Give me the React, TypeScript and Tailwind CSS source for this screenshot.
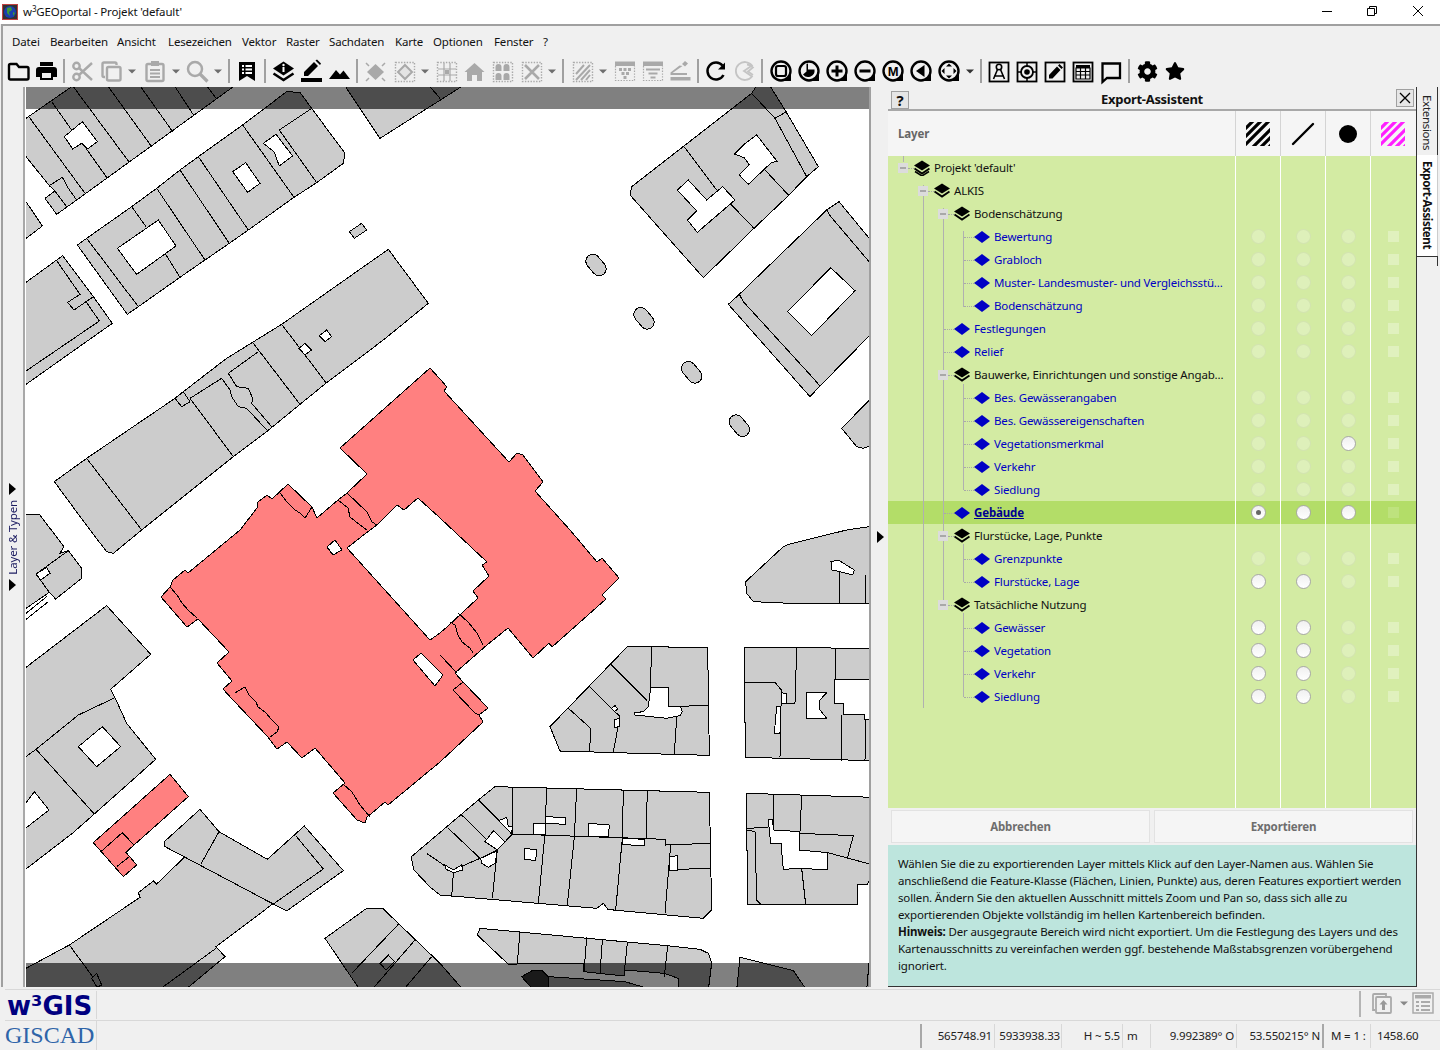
import React from "react";
import { FaCog, FaStar } from "react-icons/fa";

const G = "#a9a9a9";
const BG = "#f0f0f0";

function I({ children, w = "w-7", cls = "" }: { children?: React.ReactNode; w?: string; cls?: string }) {
  return (
    <svg viewBox={w === "w-7" ? "0 0 28 28" : "0 0 14 28"} className={`${w} h-7 shrink-0 ${cls}`}>
      {children}
    </svg>
  );
}
const Drop = ({ c = "#6e6e6e", cls = "" }: { c?: string; cls?: string }) => (
  <svg viewBox="0 0 14 28" className={`w-3.5 h-7 shrink-0 ${cls}`}>
    <polygon points="3,12.5 11,12.5 7,16.5" fill={c} />
  </svg>
);
const Sep = () => (
  <div className="w-2 h-7 shrink-0 flex">
    <div className="ml-[3px] mt-0.5 h-6 w-0.5 bg-[#a0a0a0]" />
  </div>
);
const Round = ({ children }: { children?: React.ReactNode }) => (
  <I>
    <path d="M14 14h10v10H14z" fill="#000" />
    <circle cx="14" cy="14" r="9.5" fill={BG} stroke="#000" strokeWidth="2.4" />
    {children}
  </I>
);
const Dotted = () => <rect x="5.5" y="5.5" width="19" height="19" fill="none" stroke={G} strokeWidth="1.4" strokeDasharray="1.4 1.4" />;

function Toolbar() {
  return (
    <div className="flex h-7 pl-px items-center">
      <I><path d="M5 8.5A1.5 1.5 0 0 1 6.5 7h6l2.5 3h8A1.5 1.5 0 0 1 24.5 11.5V21A1.5 1.5 0 0 1 23 22.5H6.5A1.5 1.5 0 0 1 5 21z" fill="none" stroke="#000" strokeWidth="2.4" /></I>
      <I><path d="M8 5h13v4H8zM4 13a3 3 0 0 1 3-3h15a3 3 0 0 1 3 3v7h-4v3H8v-3H4z" fill="#000" /><path d="M10 16h9v5h-9z" fill={BG} /></I>
      <Sep />
      <I><g fill="none" stroke={G} strokeWidth="2.4"><circle cx="8.5" cy="9" r="3.2" /><circle cx="8.5" cy="20" r="3.2" /><path d="M11 11l13 12M11 18L24 6" /></g></I>
      <I cls="ml-px"><g fill="none" stroke={G} strokeWidth="2.4"><path d="M8 20H7a1.5 1.5 0 0 1-1.5-1.5V7A1.5 1.5 0 0 1 7 5.5h11A1.5 1.5 0 0 1 19.500 7v1" /><rect x="10" y="10" width="13.500" height="13.500" rx="1.500" /></g></I>
      <Drop />
      <I cls="ml-0.5"><g fill="none" stroke={G} strokeWidth="2.4"><rect x="5.500" y="7" width="17" height="17" rx="1.500" /><path d="M9 13h10M9 16.500h10M9 20h10" strokeWidth="1.800" /></g><rect x="10" y="4" width="8" height="5" fill={G} /></I>
      <Drop />
      <I><g fill="none" stroke={G}><circle cx="12" cy="12" r="7" strokeWidth="2.500" /><path d="M17 17l7.500 7.500" strokeWidth="3.200" /></g></I>
      <Drop />
      <Sep />
      <I><path d="M6 5h16v19l-8-5-8 5z" fill="#000" /><path d="M9 8h2v2H9zM12.500 8h6.500v2h-6.500zM9 11.500h2v2H9zM12.500 11.500h6.500v2h-6.500zM9 15h2v2H9zM12.500 15h6.500v2h-6.500z" fill="#fff" /></I>
      <Sep />
      <I><polygon points="14.500,4.500 25,11.500 14.500,18.500 4,11.500" fill="#000" /><circle cx="14.500" cy="8" r="1.200" fill="#fff" /><rect x="13.500" y="10" width="2" height="5" fill="#fff" /><path d="M4.500 16.500l10 6.500 10-6.500" fill="none" stroke="#000" strokeWidth="2.600" /></I>
      <I><rect x="4" y="21" width="21" height="4" fill="#000" /><path d="M7 19v-4L17 5l4 4-10 10zM18.500 3.500l1.500-1 4 4-1 1.500z" fill="#000" /></I>
      <I><polygon points="4,22 11,13 15,17.500 18.500,13.500 25,22" fill="#000" /></I>
      <Sep />
      <I><polygon points="14.500,7 23,15 14.500,23 6,15" fill={G} /><path d="M5 6l3 3M24 6l-3 3M5 24l3-3M24 24l-3-3" stroke={G} strokeWidth="1.500" /></I>
      <I cls="ml-px"><Dotted /><polygon points="15,8 22,15 15,22 8,15" fill="#e4e4e4" stroke={G} strokeWidth="2" /></I>
      <Drop />
      <I><Dotted /><path d="M6 12h18M6 18h18M12 6v18M18 6v18" stroke={G} strokeWidth="1.200" /><rect x="13" y="13" width="4" height="4" fill={G} /></I>
      <I><path d="M14.500 6l10 9h-2.500v9h-5v-6h-5v6H7v-9H4.500z" fill={G} /></I>
      <I><Dotted /><path d="M7.500 14v-4a3 3 0 0 1 6 0v4zM15.500 14v-4a3 3 0 0 1 6 0v4zM7.500 23v-4a3 3 0 0 1 6 0v4zM15.500 23v-4a3 3 0 0 1 6 0v4z" fill={G} /></I>
      <I cls="ml-px"><Dotted /><path d="M8 8l14 14M22 8L8 22" stroke={G} strokeWidth="2.600" /></I>
      <Drop />
      <Sep />
      <I cls="ml-px"><Dotted /><path d="M8 17l8-9M8 23l14-15M13 23l9-10M18 23l4-5" stroke={G} strokeWidth="2" /></I>
      <Drop />
      <I><rect x="5" y="4.500" width="20" height="4.500" fill={G} /><path d="M5.500 9v14.500h19V9" fill="none" stroke={G} strokeWidth="1.200" strokeDasharray="1.400 1.400" /><path d="M9 11h3v3H9zM13.500 11h3v3h-3zM18 11h3v3h-3zM11.500 15h3v3h-3zM16 15h3v3h-3zM13.500 19h3v3h-3z" fill={G} /></I>
      <I><rect x="5" y="4.500" width="20" height="4.500" fill={G} /><path d="M5.500 9v14.500h19V9" fill="none" stroke={G} strokeWidth="1.200" strokeDasharray="1.400 1.400" /><path d="M8 11.500h14v2H8zM10.500 15.500h9v2h-9zM12.500 19.500h5v2h-5z" fill={G} /></I>
      <I><path d="M4.500 20h20v3.500h-20zM4.500 15.500l9-7 3 .5 -10 7h14.500v2H4.500zM16 7l3-3 3 2.500-3 3z" fill={G} /></I>
      <Sep />
      <I><path d="M21.500 18a8.500 8.500 0 1 1-1-9.500" fill="none" stroke="#000" strokeWidth="2.500" /><polygon points="23,5.500 23,12.500 16,12.500" fill="#000" /></I>
      <I><g fill="none" stroke="#c4c4c4" strokeWidth="1.800"><path d="M22 8.500A9 9 0 1 0 22 19.500L14 14z" /><path d="M17 7.500a9 9 0 0 1 6 3L18 14.500l5 3.500" /></g></I>
      <Sep />
      <div className="ml-px"><Round><rect x="9" y="9" width="10" height="10" rx="2" fill="none" stroke="#000" strokeWidth="2.200" /></Round></div>
      <Round><path d="M13 6.500v6h6.500A6.500 6.500 0 0 1 8 17.500l3.500-3V7z" fill="#000" /></Round>
      <Round><path d="M14 8.500v11M8.500 14h11" stroke="#000" strokeWidth="3" /></Round>
      <Round><path d="M8.500 14h11" stroke="#000" strokeWidth="3" /></Round>
      <Round><text x="14" y="18.500" textAnchor="middle" fontSize="13" fontWeight="700" fontFamily="Liberation Sans, sans-serif" fill="#000">M</text></Round>
      <Round><polygon points="17.500,8 17.500,20 9,14" fill="#000" /></Round>
      <Round><path d="M14 6.500l3 3h-6zM14 21.500l-3-3h6zM6.500 14l3-3v6zM21.500 14l-3 3v-6z" fill="#000" /></Round>
      <Drop c="#333" />
      <Sep />
      <I><rect x="4.500" y="5.500" width="19" height="19" fill="none" stroke="#000" strokeWidth="1.800" /><circle cx="14" cy="10" r="2.700" fill="none" stroke="#000" strokeWidth="1.600" /><path d="M12.500 12.500L8.500 22M15.500 12.500l4 9.500M9 19h10" fill="none" stroke="#000" strokeWidth="1.600" /></I>
      <I><rect x="4.500" y="5.500" width="19" height="19" fill="none" stroke="#000" strokeWidth="1.800" /><circle cx="14" cy="15" r="6" fill="none" stroke="#000" strokeWidth="1.800" /><circle cx="14" cy="15" r="2.800" fill="#000" /><path d="M14 6v3M14 21v3M5 15h3M20 15h3" stroke="#000" strokeWidth="1.500" /></I>
      <I><rect x="4.500" y="5.500" width="19" height="19" fill="none" stroke="#000" strokeWidth="1.800" /><path d="M8 21.500v-3.500l8-8.500 3.500 3.500-8 8.500zM17 8.500l1.500-1.500 3.500 3.500-1.500 1.500z" fill="#000" /></I>
      <I><rect x="4.500" y="5.500" width="19" height="19" fill="none" stroke="#000" strokeWidth="1.800" /><rect x="7" y="8" width="14" height="3" fill="#000" /><path d="M7 11h14v11H7zM7 14.500h14M7 18h14M11.500 11v11M16.500 11v11" fill="none" stroke="#000" strokeWidth="1.200" /></I>
      <I><path d="M5.500 6.500h17.500v14.500H10l-4.500 4z" fill="none" stroke="#000" strokeWidth="2.300" /></I>
      <Sep />
      <div className="w-7 h-7 shrink-0 flex items-center justify-center"><FaCog className="w-[21px] h-[21px] text-black" /></div>
      <div className="w-7 h-7 shrink-0 flex items-center justify-center"><FaStar className="w-[20px] h-[20px] text-black" /></div>
    </div>
  );
}

const M = { vectorEffect: "non-scaling-stroke" as const, stroke: "#000", strokeWidth: 1 };
const P = ({ p, f = "#cccccc" }: { p: string; f?: string }) => <polygon points={p} fill={f} {...M} />;
const H = ({ p }: { p: string }) => <polygon points={p} fill="#fff" {...M} />;
const L = ({ p }: { p: string }) => <polyline points={p} fill="none" {...M} />;
const Z = ({ x, y, children }: { x: number; y: number; children?: React.ReactNode }) => (
  <g transform={`translate(${x} ${y}) scale(0.33333)`}>{children}</g>
);
const Oval = ({ x, y }: { x: number; y: number }) => (
  <rect x={x - 36} y={y - 21} width="72" height="42" rx="21" fill="#cccccc" transform={`rotate(50 ${x} ${y})`} {...M} />
);

function MapView() {
  const RED = "#ff8080";
  return (
    <svg viewBox="26 87 843 900" className="w-[843px] h-[900px] shrink-0 block" shapeRendering="crispEdges">
      <defs>
        <filter id="dim" filterUnits="userSpaceOnUse" x="26" y="87" width="843" height="900" colorInterpolationFilters="sRGB">
          <feComponentTransfer>
            <feFuncR type="linear" slope="1" intercept="-0.498" />
            <feFuncG type="linear" slope="1" intercept="-0.498" />
            <feFuncB type="linear" slope="1" intercept="-0.498" />
          </feComponentTransfer>
        </filter>
        <clipPath id="band" clipPathUnits="userSpaceOnUse">
          <rect x="26" y="87" width="843" height="22" />
          <rect x="26" y="963" width="843" height="24" />
        </clipPath>
      </defs>
      <g id="mapart">
        <rect x="26" y="87" width="843" height="900" fill="#fff" />
        <Z x={0} y={85}>
          <P p="78,100 215,5 700,5 230,345 170,388 135,340 165,318 148,302 78,215" />
          <H p="193,155 247,110 292,170 262,192 245,175 218,192" />
          <L p="155,50 215,135" /><L p="220,5 388,232" /><L p="325,5 455,185" /><L p="422,5 518,140" /><L p="525,5 582,92" /><L p="622,5 650,42" />
          <L p="88,97 255,325" /><L p="258,190 322,280" /><L p="165,318 200,365" /><L p="148,302 187,277 200,300 205,310 230,345" />
          <P p="78,350 127,423 78,460" />
          <P p="1030,-5 1400,-5 1140,160" />
          <L p="1290,5 1320,40" />
          <P p="232,480 260,460 395,365 470,310 540,255 595,215 728,120 860,20 900,22 935,70 1035,205 1030,235 950,293 882,337 745,435 688,475 615,525 540,577 415,665 382,688" />
          <L p="260,460 415,665" /><L p="395,365 438,425" /><L p="470,310 615,525" /><L p="540,255 688,475" /><L p="595,215 745,435" /><L p="728,120 882,337" /><L p="935,70 838,135 950,293" /><L p="497,508 540,577" />
          <H p="352,490 475,405 528,483 410,568" /><H p="698,260 737,233 780,295 743,322" /><H p="790,175 828,148 878,213 838,243 822,200" />
          <P p="1048,440 1085,415 1100,435 1063,460" />
          <P p="78,592 188,512 280,635 337,715 78,898" />
          <L p="170,527 240,628 203,652 222,675 280,635" /><L p="258,650 298,708 78,858" />
          <P p="163,1190 260,1120 525,940 550,920 680,820 845,718 1165,493 1285,655 1150,765 980,893 900,958 800,1040 700,1115 425,1335 340,1405 320,1400 270,1335" />
          <L p="260,1120 425,1335" /><L p="570,940 700,1115" /><L p="760,775 900,958" /><L p="845,718 978,893" />
          <L p="570,940 665,880 690,915 695,935 715,965 740,970 800,1035" />
          <L p="775,800 685,865 710,905 745,910 758,940 755,955 815,1025" />
          <L p="525,940 545,965 570,950 550,920" />
          <H p="958,752 980,735 995,755 975,770" /><H p="897,790 915,775 935,795 915,810" />
        </Z>
        <Z x={440} y={85}>
          <P p="570,330 575,305 935,25 955,-5 985,-5 1035,75 1135,245 1100,275 1045,332 942,430 790,578" />
          <L p="732,185 830,315" /><L p="935,25 1005,100 1100,275" /><L p="1005,100 1040,80" /><L p="870,355 942,430" /><L p="975,255 1047,332" />
          <H p="712,315 745,285 800,345 848,305 885,345 772,442 742,405 770,378" />
          <H p="883,207 910,180 950,150 1012,230 995,232 925,298 898,270 928,238 912,218" />
          <P p="865,658 898,628 1160,375 1197,350 1300,475 1300,740 1140,903 1110,935" />
          <L p="898,628 910,650 1120,880 1140,903" /><L p="1160,375 1170,392 1300,545" />
          <H p="1043,680 1172,548 1245,617 1115,752" />
          <Oval x={468} y={540} /><Oval x={612} y={700} /><Oval x={755} y={862} /><Oval x={898} y={1022} />
          <P p="1205,1030 1300,933 1300,1080 1270,1090 1250,1085" />
        </Z>
        <Z x={0} y={530}>
          <P p="78,-45 118,-47 192,50 180,70 205,62 245,115 245,145 167,207 148,187 78,235" />
          <L p="108,132 205,62" /><L p="108,132 148,187" /><H p="108,132 140,112 150,130 122,150" />
          <L p="78,250 140,200" /><L p="78,268 145,215" />
          <P p="320,227 452,373 332,478 345,503 380,580 467,688 283,852 217,910 78,1017 78,412" />
          <L p="78,680 108,658 235,555 345,503" /><L p="108,658 283,852" />
          <H p="235,650 307,590 362,650 290,710" /><H p="70,830 103,785 147,840 70,900" />
          <P f={RED} p="510,733 565,800 402,945 378,967 410,1005 370,1040 280,938" />
          <L p="305,963 367,908 402,945" /><L p="350,1010 388,980" />
          <P p="555,980 470,1062 460,1053 415,1088 420,1102 208,1245 78,1315 78,1380 555,1380 675,1280 648,1250 818,1122 602,1002" />
          <L p="208,1245 300,1370" /><L p="648,1255 490,1370" />
          <P p="275,1345 290,1330 305,1365 290,1370" />
          <P p="600,838 657,905 802,988 913,888 1030,1022 860,1143 820,1122 495,950 493,935" />
          <L p="657,905 603,1002" /><L p="888,918 970,1017 820,1122" />
          <P p="975,1225 1100,1135 1148,1135 1320,1300 1390,1380 1080,1380" />
          <L p="1195,1183 1055,1330" /><L p="1245,1230 1115,1380" /><L p="1295,1280 1210,1380" />
          <P p="1140,1300 1165,1275 1183,1295 1158,1320" />
        </Z>
        <Z x={440} y={530}>
          <P p="917,155 1030,50 1045,43 1220,0 1300,-12 1300,222 1095,222 940,215 920,190" />
          <L p="1198,125 1198,222" /><L p="1277,135 1277,222" />
          <H p="1173,95 1195,90 1243,120 1238,135 1200,125 1175,120" />
          <P p="330,590 562,350 803,352 808,676 660,672 360,663" />
          <L p="635,350 630,510" /><L p="512,402 622,512" /><L p="447,468 540,560" /><L p="383,533 452,595 449,663" /><L p="540,560 520,665" /><L p="710,562 703,672" /><L p="708,530 805,525" />
          <H p="632,472 685,472 685,530 722,530 727,545 720,557 680,565 585,555 585,548 610,545 625,530" />
          <H p="522,570 538,565 538,590 524,592" /><H p="515,535 525,527 533,537 523,545" />
          <P p="913,352 1300,355 1300,692 916,682" />
          <L p="915,457 1005,457 1024,480 1020,680" /><L p="1070,355 1065,520 1025,520" /><L p="1187,355 1185,450" /><L p="1205,555 1205,692" /><L p="1277,570 1275,692" />
          <H p="1185,450 1300,450 1300,570 1275,570 1275,555 1210,555 1210,520 1185,520" />
          <H p="1100,488 1160,488 1140,510 1140,540 1160,565 1100,565" />
          <H p="1010,530 1022,530 1020,610 1003,610" /><H p="1025,488 1040,492 1040,520 1025,520" />
          <P p="-87,981 115,810 165,770 808,787 815,1140 790,1165 520,1140 505,1140 490,1120 470,1135 0,1095 -30,1071 -78,1020" />
          <L p="217,770 217,912" /><L p="320,772 315,910" /><L p="410,775 403,920" /><L p="550,780 547,925" /><L p="622,782 618,925" />
          <L p="217,912 677,928 677,945 810,940" /><L p="692,945 675,1150" /><L p="403,920 382,1125" /><L p="315,910 295,1120" /><L p="547,925 527,1140" /><L p="172,960 157,1105" /><L p="40,1030 35,1100" /><L p="715,1018 810,1015" />
          <L p="115,810 217,912" /><L p="65,855 172,960" /><L p="25,895 120,985" /><L p="172,960 217,912" /><L p="172,960 120,985 40,1020" /><L p="-40,970 40,1025" />
          <H p="176,872 200,862 205,890 217,890 215,912" /><H p="280,880 318,880 318,915 280,915" /><H p="318,860 377,863 377,883 318,880" /><H p="445,880 508,885 505,920 445,918" /><H p="548,925 615,928 612,948 548,943" /><H p="255,955 290,960 287,992 253,987" /><H p="135,935 160,902 195,935 172,960" /><H p="122,985 172,962 165,1000 145,1012 125,1000" /><H p="15,1005 40,1020 65,1005 68,1020 40,1028 18,1018" /><H p="688,980 712,977 712,1022 688,1022" />
          <P p="920,790 1300,802 1300,1035 1280,1065 1253,1065 1253,1123 922,1123" />
          <L p="1000,795 1000,900" /><L p="1085,797 1080,905" /><L p="920,895 985,892" /><L p="920,900 945,905 950,1110 962,1123" /><L p="1085,1015 1097,1123" /><L p="1078,910 1240,917 1222,985" /><L p="1163,968 1300,1005" />
          <H p="985,870 998,870 1000,900 1080,905 1078,960 1163,968 1163,1020 1085,1015 1030,1018 1023,940 992,940" />
          <P p="112,1215 120,1195 680,1247 780,1258 805,1270 815,1300 805,1380 715,1380 715,1345 672,1330 555,1320 552,1338 430,1325 432,1300 232,1302 205,1303" />
          <L p="240,1205 232,1300" /><L p="440,1222 432,1325" /><L p="487,1230 480,1330" /><L p="562,1240 552,1335" /><L p="683,1248 673,1340" />
          <P f="#999999" p="245,1340 280,1320 307,1322 325,1340 325,1380 280,1380" />
          <P p="325,1340 555,1355 640,1380 325,1380" />
          <P p="900,1282 1060,1322 1100,1380 890,1380" />
          <L p="1290,1265 1280,1380" />
        </Z>
        <polygon
          fill={RED}
          {...M}
          points="430,368 440,379 447,387 444,391 509,462 517,453 523,455 543,482 535,491 570,530 597,562 602,558 619,578 602,595 606,599 552,647 549,643 533,658 508,628 487,645 455,673 463,682 488,708 479,715 483,722 440,762 388,805 385,802 372,813 367,817 365,823 357,820 333,793 345,783 315,748 302,758 287,742 277,749 268,737 233,700 223,689 232,681 217,663 229,652 198,619 187,627 161,597 170,587 173,580 185,570 188,573 240,530 257,508 258,502 267,495 272,499 288,484 312,507 317,518 338,500 347,493 367,474 340,448"
        />
        <polygon
          fill="#fff"
          {...M}
          points="347,548 370,530 377,525 397,505 404,510 418,498 440,518 487,562 482,565 489,576 473,591 478,598 447,627 440,633 430,640"
        />
        <polyline fill="none" {...M} points="280,493 287,502 295,510 300,513 305,518 312,507" />
        <polyline fill="none" {...M} points="338,500 348,508 350,517 360,525 367,530" />
        <polyline fill="none" {...M} points="347,493 367,512 372,522 377,525" />
        <polyline fill="none" {...M} points="450,622 455,625 458,635 462,642 470,648 473,653" />
        <polyline fill="none" {...M} points="458,613 468,622 477,633 483,645" />
        <polyline fill="none" {...M} points="440,655 457,673" />
        <polyline fill="none" {...M} points="463,682 453,690 475,713 479,715" />
        <polyline fill="none" {...M} points="170,587 177,595 182,603 188,610 197,618" />
        <polyline fill="none" {...M} points="235,693 245,687 249,695 256,702 258,707 265,712 272,720 279,727 277,732 270,737" />
        <polyline fill="none" {...M} points="343,784 352,792 360,805 370,817" />
        <polygon fill="#fff" {...M} points="327,547 335,540 342,550 333,555" />
        <polygon fill="#fff" {...M} points="413,660 421,653 443,675 435,686" />
      </g>
      <use href="#mapart" clipPath="url(#band)" filter="url(#dim)" />
    </svg>
  );
}

type Kind = "d" | "w" | "s";
type RowT = { t: string; depth: number; group?: boolean; top?: boolean; cols?: [Kind, Kind, Kind]; bold?: boolean };
const dd: [Kind, Kind, Kind] = ["d", "d", "d"];
const wwd: [Kind, Kind, Kind] = ["w", "w", "d"];
const rows: RowT[] = [
  { t: "Projekt 'default'", depth: 0, group: true, top: true },
  { t: "ALKIS", depth: 1, group: true },
  { t: "Bodenschätzung", depth: 2, group: true },
  { t: "Bewertung", depth: 3, cols: dd },
  { t: "Grabloch", depth: 3, cols: dd },
  { t: "Muster- Landesmuster- und Vergleichsstü...", depth: 3, cols: dd },
  { t: "Bodenschätzung", depth: 3, cols: dd },
  { t: "Festlegungen", depth: 2, cols: dd },
  { t: "Relief", depth: 2, cols: dd },
  { t: "Bauwerke, Einrichtungen und sonstige Angab...", depth: 2, group: true },
  { t: "Bes. Gewässerangaben", depth: 3, cols: dd },
  { t: "Bes. Gewässereigenschaften", depth: 3, cols: dd },
  { t: "Vegetationsmerkmal", depth: 3, cols: ["d", "d", "w"] },
  { t: "Verkehr", depth: 3, cols: dd },
  { t: "Siedlung", depth: 3, cols: dd },
  { t: "Gebäude", depth: 2, cols: ["s", "w", "w"], bold: true },
  { t: "Flurstücke, Lage, Punkte", depth: 2, group: true },
  { t: "Grenzpunkte", depth: 3, cols: dd },
  { t: "Flurstücke, Lage", depth: 3, cols: wwd },
  { t: "Tatsächliche Nutzung", depth: 2, group: true },
  { t: "Gewässer", depth: 3, cols: wwd },
  { t: "Vegetation", depth: 3, cols: wwd },
  { t: "Verkehr", depth: 3, cols: wwd },
  { t: "Siedlung", depth: 3, cols: wwd },
];
const PAD = ["pl-[10px]", "pl-[30px]", "pl-[50px]", "pl-[70px]"];

const Radio = ({ k }: { k: Kind }) => {
  if (k === "d") return <div className="w-[15px] h-[15px] rounded-full bg-white/25 border border-black/5" />;
  return (
    <div className="w-[15px] h-[15px] rounded-full bg-gradient-to-b from-[#f0f0f0] to-white border border-[#a8a8a8] flex items-center justify-center">
      {k === "s" && <div className="w-[5px] h-[5px] rounded-full bg-[#666]" />}
    </div>
  );
};
const Cell = ({ children }: { children?: React.ReactNode }) => (
  <div className="w-[45px] shrink-0 border-l border-white flex items-center justify-center">{children}</div>
);
const LayerIcon = ({ top }: { top?: boolean }) => (
  <svg viewBox="0 0 16 16" className="w-4 h-4 shrink-0">
    <polygon points="8,0.500 16,5.500 8,10.500 0,5.500" fill="#000" />
    <path d="M0.500 8.500l7.500 5 7.500-5" fill="none" stroke="#000" strokeWidth="2" />
    {top && <path d="M1 11.500l7 4.500 7-4.500" fill="none" stroke="#000" strokeWidth="1.500" />}
  </svg>
);
const Diamond = () => (
  <svg viewBox="0 0 16 12" className="w-4 h-3 shrink-0">
    <polygon points="8,0 16,6 8,12 0,6" fill="#0000c4" />
  </svg>
);

function Tree() {
  return (
    <div className="relative flex-1 flex flex-col bg-[#d3eba3] min-h-0">
      {rows.map((r, i) => (
        <div key={i} className={`flex h-[23px] shrink-0 ${r.bold ? "bg-[#b3dd68]" : ""}`}>
          <div className={`w-[347px] shrink-0 flex items-center pt-px ${PAD[r.depth]}`}>
            <div className="w-4 h-[22px] flex items-center shrink-0">
              {r.group ? (
                <>
                  <div className="relative z-10 w-[10px] h-[10px] bg-[#dcdcdc] flex items-center justify-center shrink-0">
                    <div className="w-[6px] h-[2px] bg-[#a8a8a8]" />
                  </div>
                  <div className="w-[6px] border-t border-dotted border-[#a8a8a8]" />
                </>
              ) : (
                <div className="ml-[6px] w-[10px] border-t border-dotted border-[#a8a8a8]" />
              )}
            </div>
            {r.group ? <LayerIcon top={r.top} /> : <Diamond />}
            <span
              className={`ml-1 whitespace-nowrap ${r.group ? "text-[#111]" : r.bold ? "text-[#000090] font-bold underline" : "text-[#0000c4]"}`}
            >
              {r.t}
            </span>
          </div>
          {r.cols ? (
            <>
              <Cell><Radio k={r.cols[0]} /></Cell>
              <Cell><Radio k={r.cols[1]} /></Cell>
              <Cell><Radio k={r.cols[2]} /></Cell>
              <Cell><div className={`w-[11px] h-[11px] ${r.bold ? "bg-white/15" : "bg-white/30"}`} /></Cell>
            </>
          ) : (
            <><Cell /><Cell /><Cell /><Cell /></>
          )}
        </div>
      ))}
      <div className="flex flex-1">
        <div className="w-[347px] shrink-0" />
        <Cell /><Cell /><Cell /><Cell />
      </div>
      {/* tree guide lines over the rows */}
      <div className="absolute left-[15px] top-0 h-[6px] w-px bg-[#b0b0b0]" />
      <div className="absolute left-[35px] top-[29px] h-[523px] w-px bg-[#b0b0b0]" />
      <div className="absolute left-[55px] top-[52px] h-[392px] w-px bg-[#b0b0b0]" />
      <div className="absolute left-[75px] top-[75px] h-[76px] w-px bg-[#b0b0b0]" />
      <div className="absolute left-[75px] top-[228px] h-[106px] w-px bg-[#b0b0b0]" />
      <div className="absolute left-[75px] top-[388px] h-[38px] w-px bg-[#b0b0b0]" />
      <div className="absolute left-[75px] top-[457px] h-[84px] w-px bg-[#b0b0b0]" />
    </div>
  );
}

const Hatch = ({ c }: { c: string }) => (
  <svg viewBox="0 0 24 24" className="w-6 h-6">
    <path d="M-3 9L9-3M-3 17L17-3M-3 25L25-3M5 27L27 5M13 27L27 13M21 27L27 21" stroke={c} strokeWidth="3.200" />
  </svg>
);
const HeadCell = ({ children }: { children?: React.ReactNode }) => (
  <div className="w-[45px] shrink-0 border-l border-[#d4d4d4] flex items-center justify-center">{children}</div>
);

function Panel() {
  return (
    <div className="w-[529px] shrink-0 flex flex-col border-r border-b border-[#333] h-[900px]">
      <div className="h-[24px] shrink-0 bg-[#f0f0f0] border-b-2 border-[#a8a8a8] relative flex items-center justify-center font-bold pt-[3px]">
        <div className="absolute left-[3px] top-[4px] w-[18px] h-[18px] bg-[#e6e6e6] border border-[#a0a0a0] flex items-center justify-center text-[15px] leading-none">?</div>
        <span className="text-[13px] tracking-[-0.3px]">Export-Assistent</span>
        <div className="absolute right-[2px] top-[2px] w-[18px] h-[18px] bg-[#e6e6e6] border border-[#a0a0a0] flex items-center justify-center">
          <svg viewBox="0 0 12 12" className="w-3 h-3"><path d="M1 1l10 10M11 1L1 11" stroke="#000" strokeWidth="1.300" /></svg>
        </div>
      </div>
      <div className="h-[45px] shrink-0 bg-[#f5f5f5] flex">
        <div className="w-[347px] shrink-0 flex items-center pl-[10px] font-bold text-[#666]">Layer</div>
        <HeadCell><Hatch c="#000" /></HeadCell>
        <HeadCell><svg viewBox="0 0 24 24" className="w-6 h-6"><path d="M2 22L22 2" stroke="#000" strokeWidth="2.400" strokeLinecap="round" /></svg></HeadCell>
        <HeadCell><svg viewBox="0 0 24 24" className="w-6 h-6"><circle cx="12" cy="12" r="9" fill="#000" /></svg></HeadCell>
        <HeadCell><Hatch c="#ff1fff" /></HeadCell>
      </div>
      <Tree />
      <div className="h-[37px] shrink-0 bg-[#f0f0f0] flex gap-[4px] px-[3px] py-[2px]">
        <div className="flex-1 bg-[#f5f5f5] border border-[#e2e2e2] flex items-center justify-center font-bold text-[#6e6e6e]">Abbrechen</div>
        <div className="flex-1 bg-[#f5f5f5] border border-[#e2e2e2] flex items-center justify-center font-bold text-[#6e6e6e]">Exportieren</div>
      </div>
      <div className="h-[141px] shrink-0 bg-[#bde5dd] pl-[10px] pt-[10px] leading-[17px] text-[#111] whitespace-nowrap">
        <div>Wählen Sie die zu exportierenden Layer mittels Klick auf den Layer-Namen aus. Wählen Sie</div>
        <div>anschließend die Feature-Klasse (Flächen, Linien, Punkte) aus, deren Features exportiert werden</div>
        <div>sollen. Ändern Sie den aktuellen Ausschnitt mittels Zoom und Pan so, dass sich alle zu</div>
        <div>exportierenden Objekte vollständig im hellen Kartenbereich befinden.</div>
        <div><b>Hinweis:</b> Der ausgegraute Bereich wird nicht exportiert. Um die Festlegung des Layers und des</div>
        <div>Kartenausschnitts zu vereinfachen werden ggf. bestehende Maßstabsgrenzen vorübergehend</div>
        <div>ignoriert.</div>
      </div>
    </div>
  );
}

const Tri = () => (
  <svg viewBox="0 0 8 12" className="w-2 h-3 shrink-0"><polygon points="0,0 7,6 0,12" fill="#000" /></svg>
);

export default function App() {
  return (
    <div className="w-[1440px] h-[1050px] overflow-hidden bg-[#f0f0f0] font-['Noto_Sans',sans-serif] text-[11.5px] tracking-[-0.15px] text-[#111] flex flex-col">
      <div className="h-6 shrink-0 bg-white flex items-center relative">
        <svg viewBox="0 0 16 16" className="w-4 h-4 ml-[2px]">
          <rect x="0.500" y="0.500" width="15" height="15" fill="#333" stroke="#c04040" />
          <circle cx="8" cy="8" r="6" fill="#1a3fb0" />
          <path d="M5 4l4-1 1 3-3 2 1 4-3-3zM11 8l2 1-2 3z" fill="#3d9a3a" />
        </svg>
        <span className="ml-[5px]">w<sup className="text-[8px] -top-[4px]">3</sup>GEOportal - Projekt 'default'</span>
        <div className="absolute left-[1322px] top-[11px] w-[10px] h-px bg-black" />
        <svg viewBox="0 0 10 10" className="absolute left-[1367px] top-[6px] w-[10px] h-[10px]"><path d="M0.500 2.500h7v7h-7zM2.500 2.500v-2h7v7h-2" fill="none" stroke="#000" /></svg>
        <svg viewBox="0 0 12 12" className="absolute left-[1412px] top-[5px] w-3 h-3"><path d="M1 1l10 10M11 1L1 11" stroke="#000" /></svg>
      </div>
      <div className="ml-px border-l-2 border-t-2 border-[#a0a0a0] flex flex-col shrink-0">
        <div className="h-[31px] flex items-center pl-[9px] pt-[1px] whitespace-nowrap">
          <div className="w-[38px]">Datei</div>
          <div className="w-[67px]">Bearbeiten</div>
          <div className="w-[51px]">Ansicht</div>
          <div className="w-[74px]">Lesezeichen</div>
          <div className="w-[44px]">Vektor</div>
          <div className="w-[43px]">Raster</div>
          <div className="w-[66px]">Sachdaten</div>
          <div className="w-[38px]">Karte</div>
          <div className="w-[61px]">Optionen</div>
          <div className="w-[49px]">Fenster</div>
          <div>?</div>
        </div>
        <Toolbar />
        <div className="h-0.5" />
        <div className="flex h-[900px]">
          <div className="w-[22px] shrink-0 border-r-2 border-[#a8a8a8] flex flex-col items-center justify-center gap-[5px]">
            <Tri />
            <span className="[writing-mode:vertical-rl] rotate-180 text-[#1a1a60] whitespace-nowrap">Layer &amp; Typen</span>
            <Tri />
          </div>
          <div className="w-px bg-white shrink-0" />
          <MapView />
          <div className="w-[19px] shrink-0 border-l-2 border-[#a0a0a0] flex items-center pl-[6px]"><Tri /></div>
          <Panel />
          <div className="flex-1 flex flex-col">
            <div className="h-[68px] flex items-center justify-center border-r border-[#333] mr-[2px] pt-[4px]">
              <span className="[writing-mode:vertical-rl] text-[#222] tracking-[-0.3px]">Extensions</span>
            </div>
            <div className="h-[101px] bg-white flex items-start justify-center pt-[6px] mr-[2px] border-r border-[#ccc]">
              <span className="[writing-mode:vertical-rl] font-bold whitespace-nowrap tracking-[-0.4px]">Export-Assistent</span>
            </div>
            <div className="h-[10px] border-t border-r border-[#333] mr-[2px]" />
          </div>
        </div>
      </div>
      <div className="flex-1 flex flex-col min-h-0">
        <div className="h-[31px] shrink-0 mt-[2px] ml-[5px] border-t border-[#d8d8d8] flex">
          <div className="w-[92px] shrink-0 border-r border-[#d8d8d8] my-px pl-[2px] pt-px font-['DejaVu_Sans',sans-serif] font-bold text-[26px] leading-[28px] text-[#000080] tracking-[0px] whitespace-nowrap">w³GIS</div>
          <div className="flex-1" />
          <div className="w-0.5 h-[26px] mt-[1px] bg-[#b4b4b4] mr-[9px]" />
          <svg viewBox="0 0 24 24" className="w-6 h-6 mt-[1px] shrink-0 mr-[3px]"><g fill="none" stroke="#aaa" strokeWidth="1.800"><path d="M5 19H3V4a1 1 0 0 1 1-1h12v2" /><rect x="6" y="6" width="15" height="16" rx="1" /></g><path d="M13.500 9l4 4.500H15V19h-3v-5.500H9.500z" fill="#999" /></svg>
          <Drop c="#888" cls="-mt-[1px]" />
          <svg viewBox="0 0 22 22" className="w-[22px] h-[22px] mt-[2px] shrink-0 ml-[1px] mr-[6px]"><rect x="1" y="1" width="20" height="20" fill="none" stroke="#aaa" strokeWidth="1.500" /><rect x="3" y="3" width="16" height="3.500" fill="#aaa" /><path d="M4 9h3v2H4zM9 9h9v2H9zM4 13h3v2H4zM9 13h9v2H9zM4 17h3v2H4zM9 17h9v2H9z" fill="#aaa" /></svg>
        </div>
        <div className="h-[30px] shrink-0 ml-[5px] border-t border-[#d8d8d8] flex items-center whitespace-nowrap text-[#222]">
          <div className="w-[92px] shrink-0 h-[29px] border-r border-[#d8d8d8] font-['Liberation_Serif',serif] text-[24px] leading-[28px] text-[#2e64a8] tracking-[0px]">GISCAD</div>
          <div className="flex-1" />
          <div className="w-[74px] h-[24px] border-l-2 border-[#a8a8a8] text-right pr-[2px] leading-[24px]">565748.91</div>
          <div className="w-[67px] h-[24px] border-l border-[#d8d8d8] text-right pr-[1px] leading-[24px]">5933938.33</div>
          <div className="w-[61px] h-[24px] border-l border-[#d8d8d8] text-right pr-[2px] leading-[24px]">H ~ 5.5</div>
          <div className="w-[28px] h-[24px] border-l border-[#d8d8d8] pl-[4px] leading-[24px]">m</div>
          <div className="w-[86px] h-[24px] border-l border-[#d8d8d8] text-right pr-[2px] leading-[24px]">9.992389° O</div>
          <div className="w-[86px] h-[24px] border-l border-[#d8d8d8] text-right pr-[2px] leading-[24px]">53.550215° N</div>
          <div className="w-[48px] h-[24px] border-l-2 border-[#a8a8a8] pl-[7px] leading-[24px]">M = 1 :</div>
          <div className="w-[70px] h-[24px] border-l border-[#d8d8d8] pl-[6px] leading-[24px]">1458.60</div>
        </div>
      </div>
    </div>
  );
}
